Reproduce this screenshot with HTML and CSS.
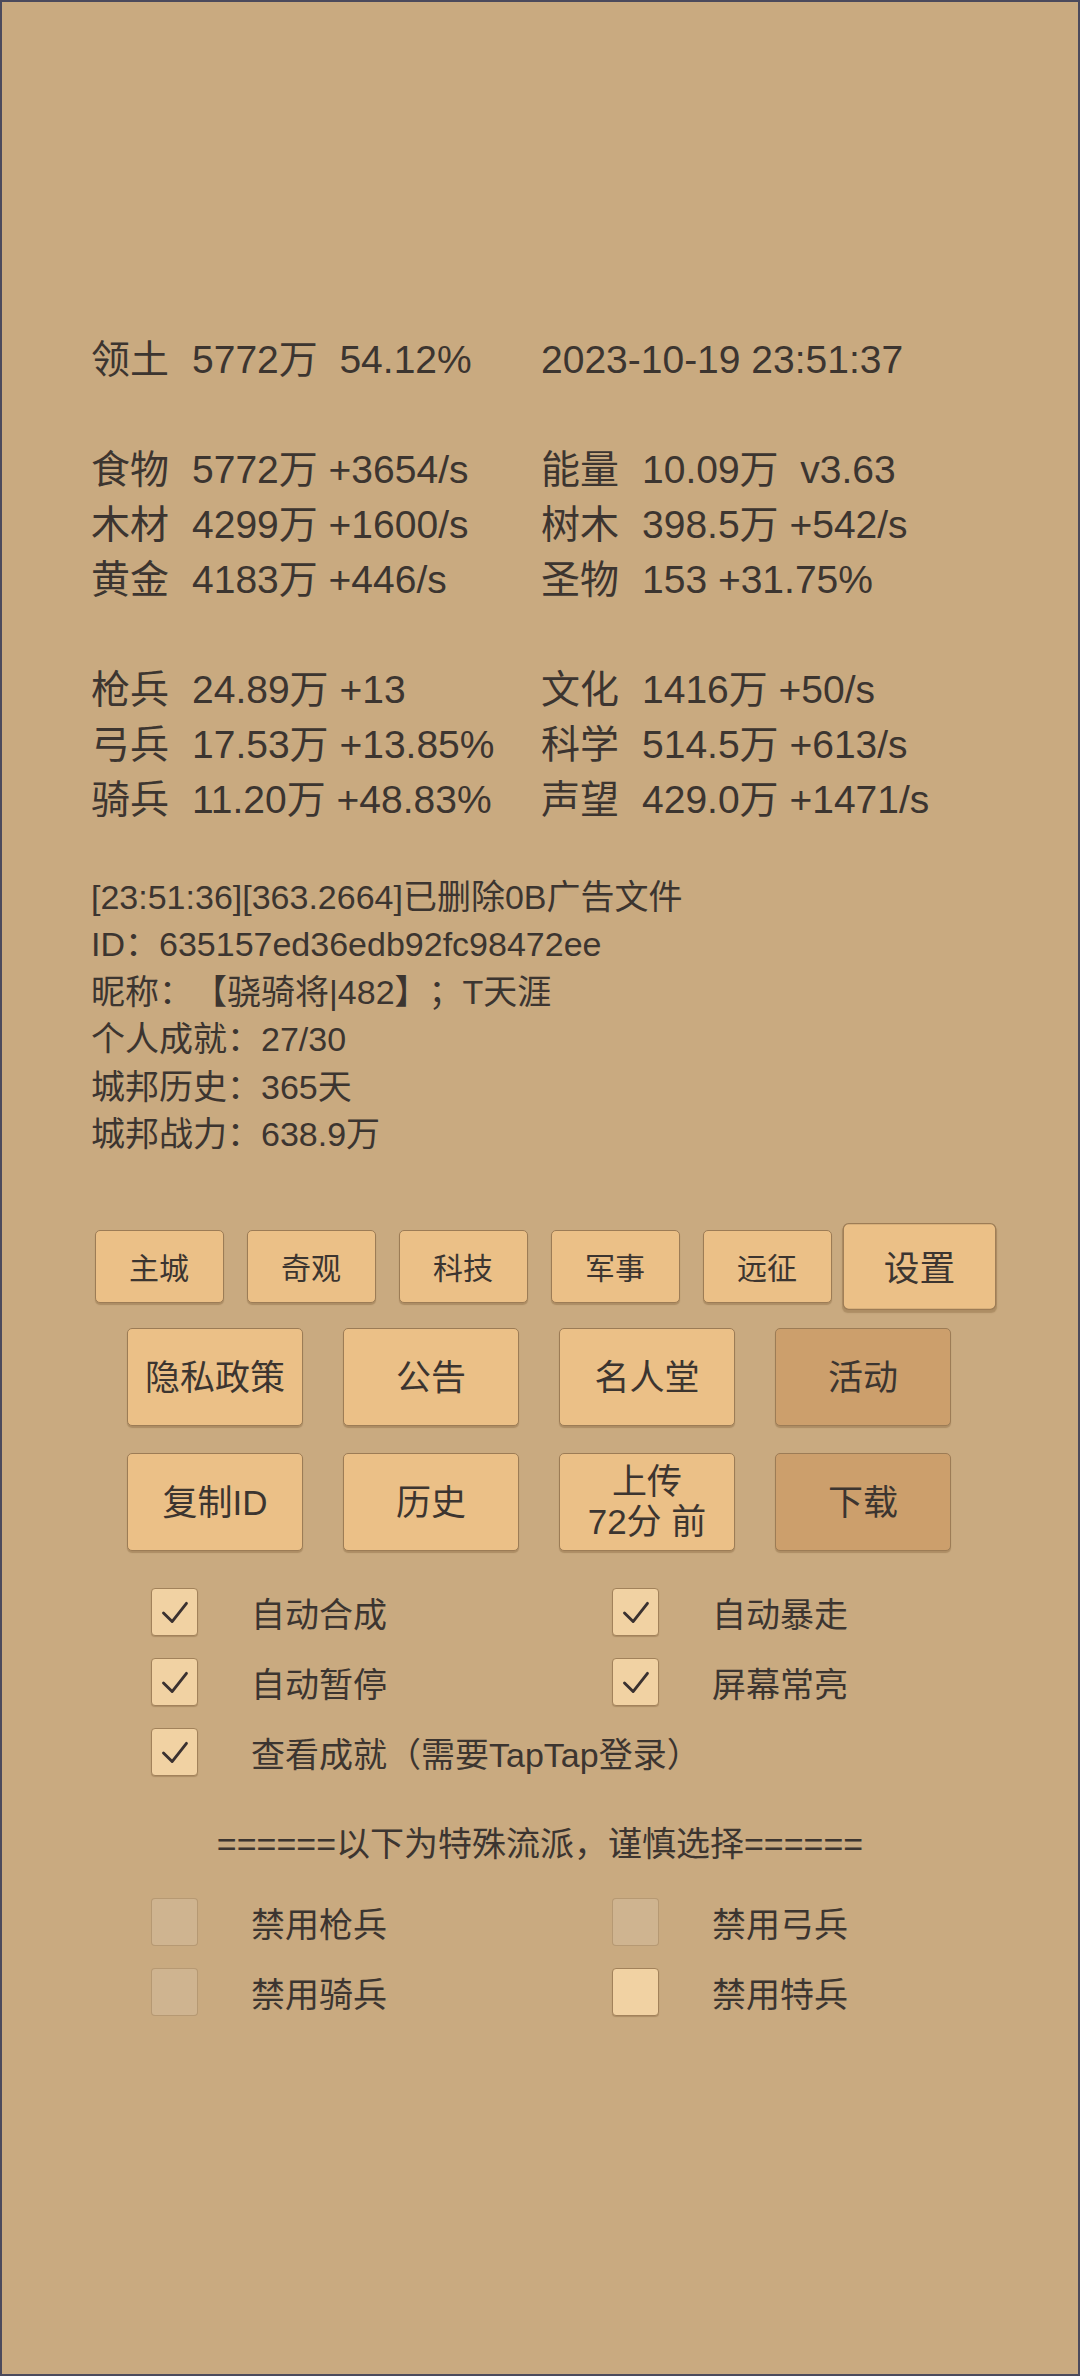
FILE: index.html
```html
<!DOCTYPE html>
<html>
<head>
<title>城邦</title>
<meta name="viewport" content="width=device-width, initial-scale=1.0, user-scalable=no">
<link rel="stylesheet" href="styles.css">
</head>

<body>
<div class=frame>

<div class=stats>
 <div class=row><span><b>领土</b>5772万  54.12%</span><span>2023-10-19 23:51:37</span></div>
 <div class=row></div>
 <div class=row><span><b>食物</b>5772万 +3654/s</span><span><b>能量</b>10.09万  v3.63</span></div>
 <div class=row><span><b>木材</b>4299万 +1600/s</span><span><b>树木</b>398.5万 +542/s</span></div>
 <div class=row><span><b>黄金</b>4183万 +446/s</span><span><b>圣物</b>153 +31.75%</span></div>
 <div class=row></div>
 <div class=row><span><b>枪兵</b>24.89万 +13</span><span><b>文化</b>1416万 +50/s</span></div>
 <div class=row><span><b>弓兵</b>17.53万 +13.85%</span><span><b>科学</b>514.5万 +613/s</span></div>
 <div class=row><span><b>骑兵</b>11.20万 +48.83%</span><span><b>声望</b>429.0万 +1471/s</span></div>
</div>

<div class=log>
 <div>[23:51:36][363.2664]已删除0B广告文件</div>
 <div>ID：635157ed36edb92fc98472ee</div>
 <div>昵称：【骁骑将|482】；T天涯</div>
 <div>个人成就：27/30</div>
 <div>城邦历史：365天</div>
 <div>城邦战力：638.9万</div>
</div>

<div class=btns>
 <div class="brow small">
  <div class=btn>主城</div>
  <div class=btn>奇观</div>
  <div class=btn>科技</div>
  <div class=btn>军事</div>
  <div class=btn>远征</div>
  <div class="btn cur">设置</div>
 </div>
 <div class="brow big">
  <div class=btn>隐私政策</div>
  <div class=btn>公告</div>
  <div class=btn>名人堂</div>
  <div class="btn dark">活动</div>
 </div>
 <div class="brow big">
  <div class=btn>复制ID</div>
  <div class=btn>历史</div>
  <div class="btn two">上传<br>72分 前</div>
  <div class="btn dark">下载</div>
 </div>
</div>

<div class=checks>
 <div class=chk><span class="box on"><svg viewBox="0 0 47 48"><path d="M12 25 L21 34 L36 15"/></svg></span>自动合成</div>
 <div class=chk><span class="box on"><svg viewBox="0 0 47 48"><path d="M12 25 L21 34 L36 15"/></svg></span>自动暴走</div>
 <div class=chk><span class="box on"><svg viewBox="0 0 47 48"><path d="M12 25 L21 34 L36 15"/></svg></span>自动暂停</div>
 <div class=chk><span class="box on"><svg viewBox="0 0 47 48"><path d="M12 25 L21 34 L36 15"/></svg></span>屏幕常亮</div>
 <div class="chk wide"><span class="box on"><svg viewBox="0 0 47 48"><path d="M12 25 L21 34 L36 15"/></svg></span>查看成就（需要TapTap登录）</div>
</div>

<div class=divider>======以下为特殊流派，谨慎选择======</div>

<div class="checks special">
 <div class=chk><span class=box></span>禁用枪兵</div>
 <div class=chk><span class=box></span>禁用弓兵</div>
 <div class=chk><span class=box></span>禁用骑兵</div>
 <div class=chk><span class="box lit"></span>禁用特兵</div>
</div>

</div>
</body>
</html>
```

FILE: styles.css
```css
html, body {
 margin:0;
 padding:0;
}
body {
 font-family:"Liberation Sans", "Noto Sans CJK SC", sans-serif;
 color:#3c3530;
 background-color:#c9aa80;
 text-spacing-trim:space-all;
}
.frame {
 box-sizing:border-box;
 width:1080px;
 height:2376px;
 border:2px solid #4b4a5c;
 background-color:#c9aa80;
 overflow:hidden;
}

.stats {
 padding:330px 0 0 89px;
 font-size:39px;
 line-height:55px;
}
.row {
 display:grid;
 grid-template-columns:450px auto;
 height:55px;
 white-space:pre;
}
.row b {
 display:inline-block;
 width:101px;
 font-weight:normal;
}

.log {
 margin-top:47px;
 padding-left:89px;
 font-size:34px;
 line-height:47.4px;
}

.btns {margin-top:72px;}
.brow {
 display:flex;
 justify-content:center;
}
.btn {
 box-sizing:border-box;
 display:flex;
 align-items:center;
 justify-content:center;
 text-align:center;
 background-color:#ebc087;
 border:1.5px solid #9c7c56;
 border-radius:5px;
 box-shadow:0 2px 1px rgba(120,90,50,0.35);
}
.small {gap:23px; margin-left:-2px;}
.small .btn {
 width:129px;
 height:73px;
 font-size:30px;
 padding-bottom:2px;
}
.small .cur {transform:scale(1.19);}
.big {gap:40px; margin-top:25px; margin-left:-2px;}
.big + .big {margin-top:27px;}
.big .btn {
 width:176px;
 height:98px;
 font-size:35px;
 padding-bottom:5px;
}
.big .two {line-height:40px; padding-bottom:0;}
.btn.dark {background-color:#cc9f6c;}

.checks {
 display:grid;
 grid-template-columns:461px auto;
 row-gap:22px;
 margin-top:37px;
 padding-left:149px;
}
.chk {
 display:flex;
 align-items:center;
 height:48px;
 font-size:34px;
}
.chk.wide {grid-column:1 / 3;}
.box {
 box-sizing:border-box;
 display:inline-block;
 width:47px;
 height:48px;
 margin-right:53px;
 border-radius:4px;
 border:1px solid rgba(150,120,80,0.45);
 background-color:#cfb490;
}
.box.on, .box.lit {
 background-color:#f1d2a3;
 border:1.5px solid #a2825b;
 box-shadow:0 1px 1px rgba(120,90,50,0.35);
}
.box svg {display:block; width:100%; height:100%;}
.box path {
 fill:none;
 stroke:#3a3130;
 stroke-width:3;
 stroke-linecap:round;
 stroke-linejoin:round;
}

.divider {
 margin-top:44px;
 text-align:center;
 font-size:34px;
 line-height:48px;
}
.checks.special {margin-top:30px;}
```
